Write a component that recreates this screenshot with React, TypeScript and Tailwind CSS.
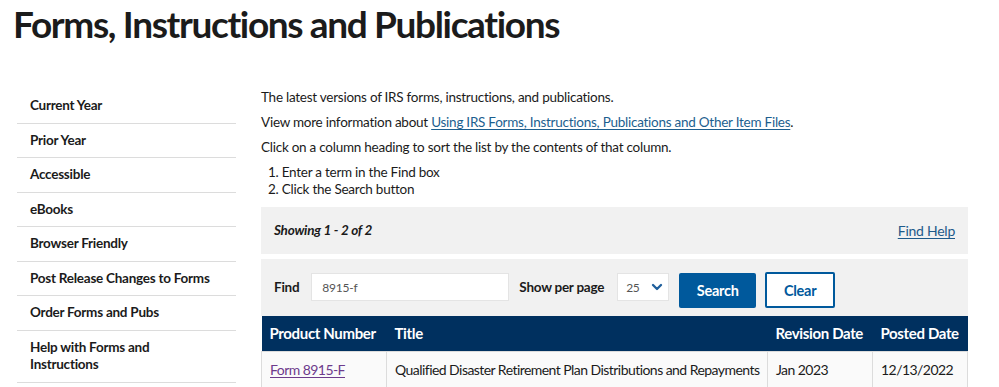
import { ChevronDown } from 'lucide-react';

const sideLinks = [
  'Current Year',
  'Prior Year',
  'Accessible',
  'eBooks',
  'Browser Friendly',
  'Post Release Changes to Forms',
  'Order Forms and Pubs',
  'Help with Forms and Instructions',
];

export default function App() {
  return (
    <div className="w-[999px] h-[387px] overflow-hidden bg-white text-[#1b1b1b] font-['Lato',sans-serif]">
      {/* Heading */}
      <h1 className="pl-[13px] pt-[2px] text-[37px] leading-[44px] font-bold tracking-[-1.35px]">
        Forms, Instructions and Publications
      </h1>

      <div className="flex mt-[43px]">
        {/* Sidebar */}
        <nav className="ml-[17px] w-[219px] shrink-0">
          {sideLinks.map((label) => (
            <div
              key={label}
              className="border-b border-[#dcdcdc] pl-[13px] py-[8px] text-[13.5px] leading-[17.5px] font-bold tracking-[-0.25px]"
            >
              <div className={label.length > 30 ? 'w-[140px]' : 'whitespace-nowrap'}>{label}</div>
            </div>
          ))}
        </nav>

        {/* Main */}
        <main className="ml-[25px] w-[707px] text-[13.5px] leading-[17px] tracking-[-0.25px]">
          <p className="mb-[8px]">The latest versions of IRS forms, instructions, and publications.</p>
          <p className="mb-[8px]">
            View more information about{' '}
            <a href="#" className="text-[#1d5f8f] underline underline-offset-2 decoration-[#1d5f8f]">
              Using IRS Forms, Instructions, Publications and Other Item Files
            </a>
            .
          </p>
          <p className="mb-[8px]">Click on a column heading to sort the list by the contents of that column.</p>
          <ol className="pl-[7px]">
            <li>1. Enter a term in the Find box</li>
            <li>2. Click the Search button</li>
          </ol>

          {/* Showing bar */}
          <div className="mt-[9px] h-[47px] bg-[#f1f1f1] flex items-center justify-between px-[13px]">
            <span className="italic font-bold">Showing 1 - 2 of 2</span>
            <a href="#" className="text-[#1e5a8a] underline underline-offset-2 text-[14px]">Find Help</a>
          </div>

          {/* Find bar */}
          <div className="mt-[5px] h-[57px] bg-[#f1f1f1] flex items-start pt-[14px] pl-[13px]">
            <span className="font-bold mt-[6px]">Find</span>
            <div className="ml-[12px] w-[198px] h-[28px] bg-white border border-[#e4e4e4] flex items-center pl-[10px] text-[12px] text-[#555]">
              8915-f
            </div>
            <span className="ml-[10px] font-bold mt-[6px]">Show per page</span>
            <div className="ml-[13px] w-[52px] h-[28px] bg-white border border-[#e4e4e4] flex items-center pl-[8px] gap-[9px] text-[12px] text-[#555]">
              25
              <ChevronDown size={16} strokeWidth={3.5} className="text-[#1f5f9c]" />
            </div>
            <button className="ml-[10px] w-[77px] h-[35px] rounded-[2px] bg-[#00599c] text-white font-bold text-[14.5px]">
              Search
            </button>
            <button className="ml-[9px] w-[70px] h-[36px] -mt-[1px] rounded-[2px] border-2 border-[#00599c] bg-white text-[#00599c] font-bold text-[14.5px]">
              Clear
            </button>
          </div>

          {/* Results table */}
          <table className="w-full border-collapse text-[14px] tracking-[-0.55px]">
            <thead>
              <tr className="bg-[#00305f] text-white h-[35px] text-[15px] tracking-[-0.35px]">
                <th className="text-left font-bold pl-[8px] w-[125px] whitespace-nowrap">Product Number</th>
                <th className="text-left font-bold pl-[8px] w-[381px]">Title</th>
                <th className="text-left font-bold pl-[8px] w-[105px] whitespace-nowrap">Revision Date</th>
                <th className="text-left font-bold pl-[8px] whitespace-nowrap">Posted Date</th>
              </tr>
            </thead>
            <tbody>
              <tr className="h-[36px] bg-[#fafafa]">
                <td className="pl-[8px] border border-[#dcdcdc] whitespace-nowrap">
                  <a href="#" className="text-[#6d3b8c] underline underline-offset-2">Form 8915-F</a>
                </td>
                <td className="pl-[8px] border border-[#dcdcdc] whitespace-nowrap">Qualified Disaster Retirement Plan Distributions and Repayments</td>
                <td className="pl-[8px] border border-[#dcdcdc] whitespace-nowrap">Jan 2023</td>
                <td className="pl-[8px] border border-[#dcdcdc] whitespace-nowrap">12/13/2022</td>
              </tr>
            </tbody>
          </table>
        </main>
      </div>
    </div>
  );
}
